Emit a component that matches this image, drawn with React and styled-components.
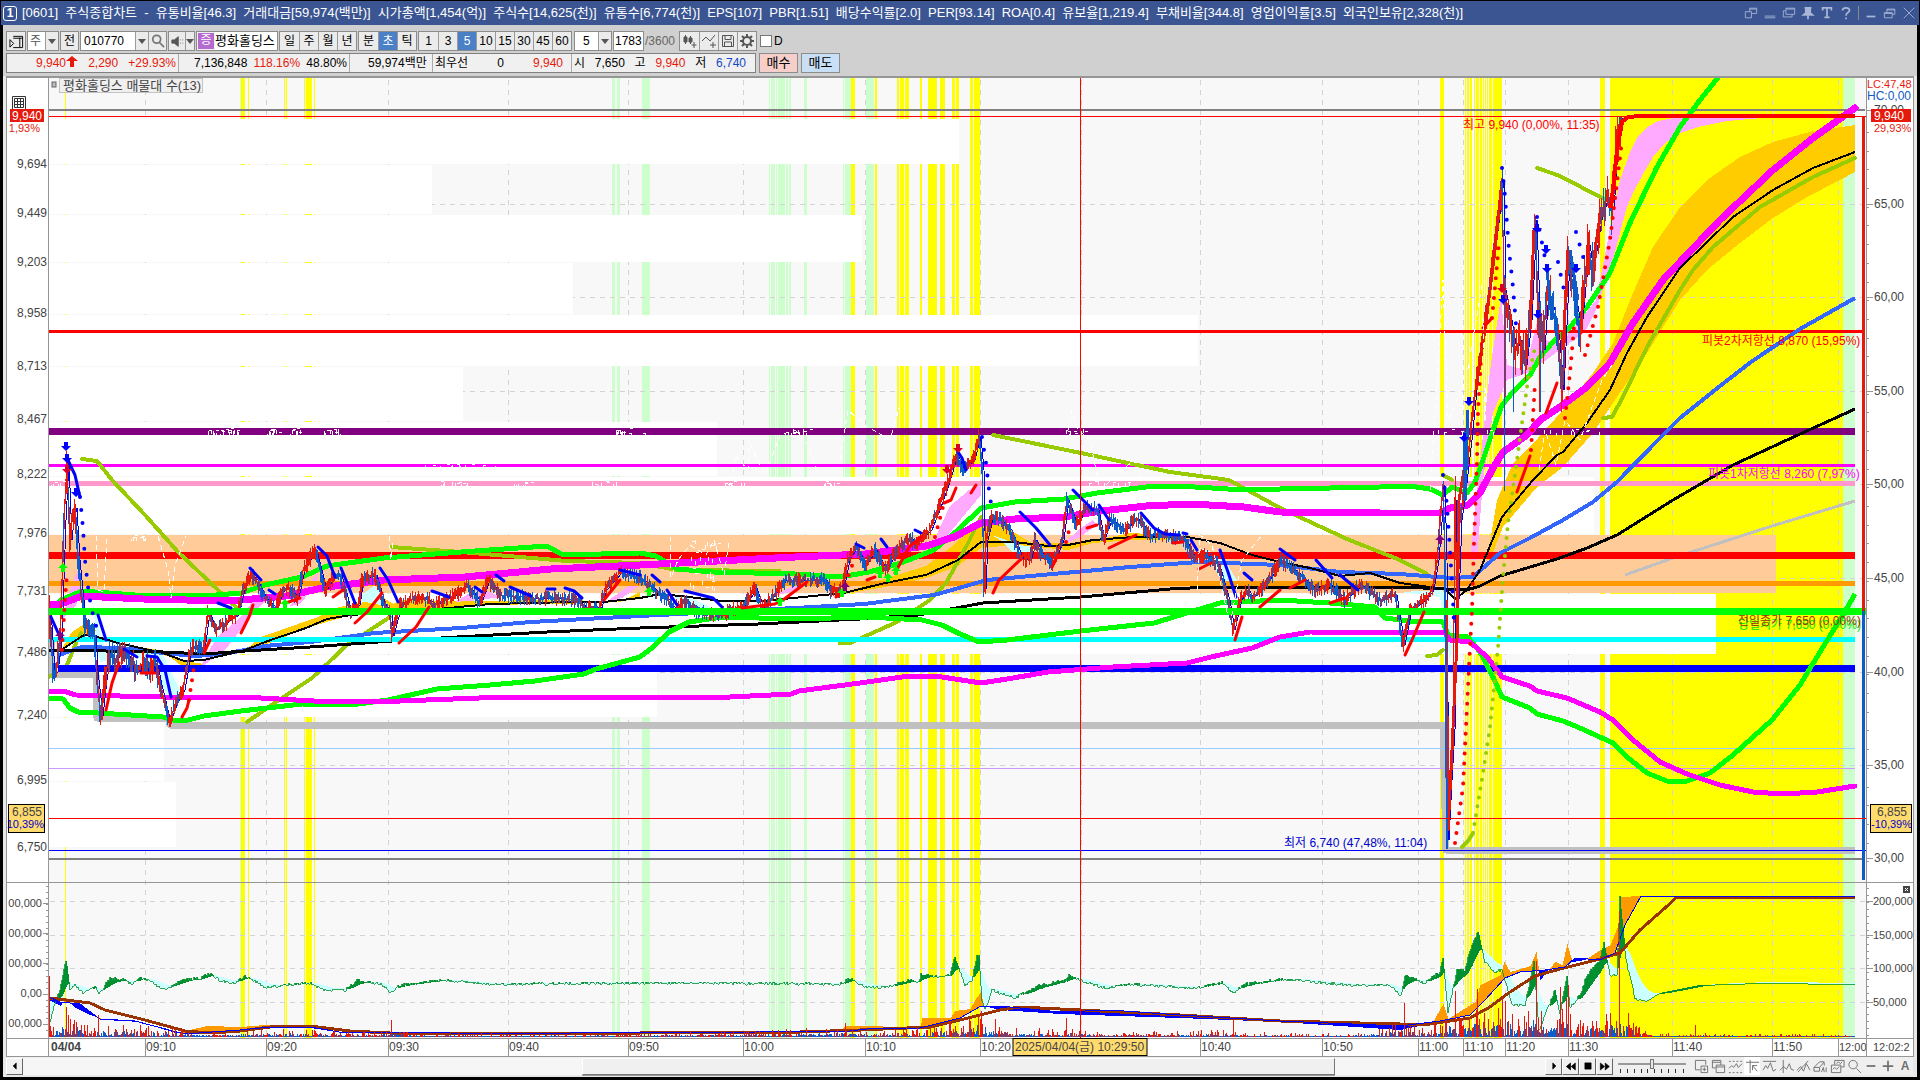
import React from 'react';
import styled, { createGlobalStyle } from 'styled-components';

const GlobalStyle = createGlobalStyle`
  * { box-sizing: border-box; }
  body {
    margin: 0;
    background: #000;
    font-family: "Liberation Sans", "Noto Sans CJK KR", sans-serif;
    font-size: 12px;
    color: #000;
  }
  button, input, select { font: inherit; color: inherit; margin: 0; }
`;

const RED = '#e61a0c';
const BLUE = '#0f5bc8';

/* ---------- window ---------- */

const Window = styled.div`
  min-height: 100vh;
  display: flex;
  flex-direction: column;
  padding: 1px 1px 3px;
  background: #000;
`;

const TitleBar = styled.header`
  height: 24px;
  display: flex;
  align-items: center;
  padding: 0 2px 0 2px;
  background: #3a5592;
  color: #fff;
`;

const WindowNo = styled.span`
  width: 14px;
  height: 15px;
  margin-right: 5px;
  border: 1px solid #fff;
  border-radius: 3px;
  font-weight: bold;
  line-height: 13px;
  text-align: center;
`;

const TitleText = styled.h1`
  flex: 0 0 75.3%;
  display: flex;
  align-items: baseline;
  justify-content: space-between;
  margin: 0;
  font-size: 13px;
  font-weight: normal;
  line-height: 20px;
  white-space: nowrap;
`;

const TitleIcons = styled.div`
  margin-left: auto;
  display: flex;
  align-items: center;
  gap: 3px;
  color: #a9b6d6;
`;

const IconButton = styled.button`
  width: 16px;
  height: 18px;
  padding: 0;
  border: 0;
  background: ${p => (p.$on ? '#fff' : 'none')};
  display: flex;
  align-items: center;
  justify-content: center;
  color: inherit;
`;

const Split = styled.i`
  width: 1px;
  height: 14px;
  margin: 0 1px;
  background: #8a8a8a;
`;

const Frame = styled.main`
  flex: 1;
  display: flex;
  flex-direction: column;
  margin: 0 2px;
  padding-bottom: 2px;
  background: #e8e8e8;
`;

/* ---------- toolbars ---------- */

const Bars = styled.div`
  padding: 6px 3px 1px;
  background: #d0d0d0;
`;

const Row = styled.div`
  display: flex;
  align-items: center;
  gap: ${p => p.$gap || 1}px;
  height: ${p => p.$h}px;
  margin-bottom: 2px;
`;

const Group = styled.div`
  display: flex;
  height: 20px;
  margin-right: ${p => p.$mr || 0}px;
  border: 1px solid #8c8c8c;
  background: #f0f0f0;
`;

const Key = styled.button`
  width: ${p => p.$w || 19}px;
  padding: 0;
  border: 0;
  border-left: ${p => (p.$first ? 0 : 1)}px solid #9a9a9a;
  background: ${p => (p.$on ? '#4a80c6' : '#ebebeb')};
  color: ${p => (p.$on ? '#fff' : p.$c || '#000')};
  display: flex;
  align-items: center;
  justify-content: center;
  line-height: 18px;
  white-space: nowrap;
`;

const Field = styled.input`
  width: ${p => p.$w}px;
  padding: 0 ${p => p.$pad || 3}px;
  border: 0;
  background: #fff;
  outline: none;
`;

const Drop = styled.select`
  width: ${p => p.$w}px;
  padding: 0 0 0 ${p => p.$pl || 2}px;
  border: 0;
  border-radius: 0;
  appearance: none;
  color: ${p => p.$c || '#000'};
  background: #fff;
  outline: none;
`;

const Badge = styled.span`
  width: 16px;
  margin: 1px;
  background: #b56ad0;
  color: #fff;
  line-height: 15px;
  text-align: center;
`;

const StockName = styled.span`
  width: 62px;
  background: #fff;
  font-size: 13px;
  line-height: 17px;
  white-space: nowrap;
`;

const Total = styled.span`
  width: 33px;
  color: #666;
`;

const Check = styled.label`
  display: flex;
  align-items: center;
  gap: 2px;
  margin-left: 2px;
  input { width: 12px; height: 12px; appearance: none; border: 1px solid #777; background: #fff; }
`;

const Quote = styled.div`
  display: flex;
  align-items: center;
  width: 750px;
  height: 20px;
  border: 1px solid #808080;
  background: #f0f0f0;
`;

const Cell = styled.div`
  width: ${p => p.$w}px;
  height: 18px;
  display: flex;
  align-items: center;
  justify-content: space-between;
  padding: 0 ${p => p.$pr || 2}px 0 ${p => p.$pl || 2}px;
  border-right: ${p => (p.$last ? 0 : 1)}px solid #aaa;
  line-height: 18px;
  white-space: nowrap;
`;

const Num = styled.span`
  color: ${p => p.$c || '#000'};
`;

const Order = styled.button`
  width: 39px;
  height: 20px;
  padding: 0;
  border: 1px solid #8c8c8c;
  background: ${p => p.$bg};
  font-size: 13px;
  line-height: 18px;
`;

/* ---------- chart ---------- */

const ChartBox = styled.section`
  flex: 1;
  display: grid;
  grid-template-columns: 42px 1fr 47px;
  grid-template-rows: 1fr 18px;
  margin: 0 3px;
  border: 1px solid #969696;
  border-top-width: 2px;
  background: #fff;
`;

const Pane = styled.svg`
  width: 100%;
  height: 100%;
  min-height: 0;
  display: block;
  overflow: hidden;
  background: ${p => p.$bg || '#fff'};
  text { font-size: 12px; fill: #444; }
  text.small { font-size: 11px; }
  text.legend { font-size: 13px; }
`;

const Scroller = styled.footer`
  height: 18px;
  display: flex;
  align-items: center;
  margin: 0 4px 0 3px;
  background: #efefef;
`;

const Raised = styled.button`
  width: 17px;
  height: 17px;
  padding: 0;
  border: 1px solid;
  border-color: #fff #666 #666 #fff;
  background: #f0f0f0;
  display: flex;
  align-items: center;
  justify-content: center;
`;

const Track = styled.div`
  flex: 1;
  height: 17px;
  display: grid;
  grid-template-columns: 559fr 753fr 210fr;
  background: #f6f6f6;
`;

const Thumb = styled.div`
  grid-column: 2;
  border: 1px solid;
  border-color: #fff #777 #777 #fff;
  background: #f0f0f0;
  box-shadow: 0 1px #999;
`;

const Speed = styled.label`
  width: 78px;
  padding: 0 5px;
  input {
    display: block;
    width: 68px;
    height: 10px;
    margin: 0;
    appearance: none;
    background: linear-gradient(#999, #999) 0 4px / 100% 2px no-repeat;
  }
  input::-webkit-slider-thumb {
    appearance: none;
    width: 4px;
    height: 10px;
    background: #e8e8e8;
    border: 1px solid #777;
  }
  svg { display: block; }
`;

const Tools = styled.div`
  display: flex;
  gap: 1px;
  margin-left: 2px;
  color: #707070;
`;

/* ---------- data ---------- */

const TITLE = [
  '[0601]', '주식종합차트', '-', '유통비율[46.3]', '거래대금[59,974(백만)]', '시가총액[1,454(억)]',
  '주식수[14,625(천)]', '유통수[6,774(천)]', 'EPS[107]', 'PBR[1.51]', '배당수익률[2.0]', 'PER[93.14]',
  'ROA[0.4]', '유보율[1,219.4]', '부채비율[344.8]', '영업이익률[3.5]', '외국인보유[2,328(천)]',
];

const YELLOW_BANDS = [
  [65, 1], [241, 4], [248, 1], [284, 1], [286, 1], [304, 1], [306, 6], [314, 1],
  [851, 4], [875, 2], [897, 2], [900, 4], [905, 4], [920, 2], [928, 9], [940, 5], [952, 3], [956, 3],
  [970, 3], [974, 6], [1440, 4], [1465, 1], [1467, 2], [1470, 2], [1474, 1], [1476, 3], [1480, 2],
  [1483, 1], [1485, 1], [1487, 1], [1489, 3], [1493, 9], [1600, 5], [1610, 233],
];
const GREEN_BANDS = [
  [240, 1], [612, 3], [617, 3], [642, 8], [769, 1], [771, 4], [776, 1], [778, 7], [786, 2], [789, 2],
  [804, 3], [843, 1], [845, 4], [849, 2], [866, 8], [1843, 12],
];

// y, height, right edge, colour
const PROFILE = [
  [119, 45, 959], [165, 49, 432], [215, 47, 862], [263, 51, 573], [315, 51, 1198], [367, 54, 463],
  [422, 54, 717], [477, 57, 1594], [535, 58, 1776, '#ffcb99'], [594, 60, 1716], [655, 62, 657],
  [718, 63, 164], [782, 65, 176],
];

const GRID_X = [145, 266, 388, 508, 628, 743, 865, 980, 1081, 1200, 1322, 1418, 1463, 1505, 1568, 1672, 1772, 1838];
const GRID_Y = [204, 297, 391, 484, 578, 672, 765, 901, 935, 968, 1002];

const TIMES = [
  [145, '09:10'], [266, '09:20'], [388, '09:30'], [508, '09:40'], [628, '09:50'], [743, '10:00'],
  [865, '10:10'], [980, '10:20'], [1200, '10:40'], [1322, '10:50'], [1418, '11:00'], [1463, '11:10'],
  [1505, '11:20'], [1568, '11:30'], [1672, '11:40'], [1772, '11:50'], [1838, '12:00'],
];

const LEFT_LABELS = [
  [164, '9,694'], [213, '9,449'], [262, '9,203'], [313, '8,958'], [366, '8,713'], [419, '8,467'],
  [474, '8,222'], [533, '7,976'], [591, '7,731'], [652, '7,486'], [715, '7,240'], [780, '6,995'], [847, '6,750'],
];
const RIGHT_LABELS = [
  [110, '70,00'], [204, '65,00'], [297, '60,00'], [391, '55,00'], [484, '50,00'], [578, '45,00'],
  [672, '40,00'], [765, '35,00'], [858, '30,00'],
];

const PRICE = [
  49,610, 51,640, 53,672, 56,672, 60,640, 64,520, 67,462, 70,540, 72,520, 75,508, 78,560, 84,620, 90,635, 94,635,
  97,680, 101,716, 105,680, 109,655, 115,660, 125,650, 130,660, 138,670, 145,660, 150,670, 155,660, 160,685,
  169,722, 175,705, 183,690, 190,650, 196,645, 203,650, 208,612, 215,630, 222,625, 237,615, 243,590, 250,575,
  256,580, 265,598, 275,608, 283,590, 289,588, 297,598, 303,570, 315,550, 320,570, 325,590, 335,575, 340,575,
  350,612, 358,605, 362,580, 375,575, 383,602, 390,615, 392,636, 400,605, 410,600, 425,598, 435,605, 455,595,
  467,585, 480,603, 488,580, 500,595, 530,598, 560,598, 575,600, 585,607, 600,608, 605,590, 620,573, 640,578,
  655,590, 668,600, 675,610, 683,600, 695,610, 720,616, 730,610, 745,605, 755,588, 762,608, 770,600, 785,580,
  800,580, 825,580, 832,592, 842,590, 848,560, 856,547, 865,565, 875,550, 885,570, 900,545, 910,538, 915,545,
  930,530, 938,510, 947,485, 956,455, 963,470, 973,460, 979,437, 982,470, 984,590, 986,540, 992,515, 1000,520,
  1010,530, 1022,560, 1030,558, 1035,540, 1042,555, 1052,565, 1062,540, 1067,500, 1076,525, 1085,508, 1097,510,
  1103,540, 1110,520, 1125,530, 1136,518, 1150,535, 1165,535, 1185,540, 1195,560, 1205,555, 1218,565, 1228,600,
  1233,630, 1240,600, 1247,590, 1252,598, 1263,588, 1275,570, 1280,560, 1300,575, 1315,590, 1330,585, 1345,600,
  1360,585, 1380,600, 1395,595, 1403,645, 1410,610, 1425,600, 1432,590, 1437,560, 1443,485, 1445,560, 1447,840,
  1450,780, 1453,730, 1455,500, 1457,600, 1460,520, 1463,500, 1470,440, 1476,380, 1485,320, 1495,240, 1502,180,
  1504,290, 1510,320, 1515,350, 1520,340, 1525,365, 1530,320, 1535,220, 1538,310, 1543,350, 1547,290, 1553,310,
  1558,340, 1562,390, 1568,260, 1575,300, 1580,330, 1588,245, 1592,270, 1600,220, 1606,200, 1612,210, 1616,150,
  1621,118,
];

const UPPER_GREEN = '49,613 61,600 82,591 135,595 204,596 241,593 265,585 302,577 327,566 384,558 461,552 547,546 563,555 640,553 656,556 677,569 713,572 795,574 840,577 869,572 901,563 934,550 958,530 981,508 1015,502 1064,499 1097,493 1146,487 1179,486 1228,489 1280,489 1380,487 1410,486 1430,489 1443,495 1452,487 1467,493 1475,482 1483,460 1493,430 1502,405 1513,392 1530,375 1540,357 1553,342 1570,327 1587,307 1610,273 1630,223 1657,167 1680,127 1700,100 1720,75';
const LOWER_GREEN = '49,698 63,699 70,708 78,712 98,713 163,717 173,720 188,720 204,716 241,711 302,704 351,705 388,700 437,689 490,685 535,681 584,674 596,669 640,657 652,648 669,632 689,622 722,617 795,619 868,617 922,620 942,625 958,633 979,642 1007,640 1081,631 1154,623 1187,613 1220,603 1280,600 1330,603 1375,607 1385,618 1410,621 1443,622 1448,635 1468,637 1480,652 1493,677 1502,697 1530,708 1537,714 1563,721 1580,728 1613,743 1627,757 1647,773 1667,781 1687,781 1710,773 1733,755 1772,720 1800,685 1823,647 1843,615 1855,594';
const UPPER_MAGENTA = '49,604 61,604 82,596 143,599 229,601 286,596 327,587 384,580 465,577 551,569 640,565 795,557 865,554 926,546 954,537 981,523 1015,519 1064,517 1101,511 1146,506 1191,504 1244,507 1280,512 1380,513 1440,513 1450,508 1468,505 1480,493 1493,468 1503,452 1527,435 1540,420 1563,405 1587,387 1610,363 1633,323 1663,280 1680,262 1720,220 1773,170 1813,138 1855,108';
const LOWER_MAGENTA = '49,691 63,691 76,695 163,697 261,698 314,701 400,701 506,697 640,697 730,697 791,694 799,691 860,683 909,676 942,677 981,683 1007,679 1048,672 1113,667 1187,663 1211,657 1252,648 1280,637 1310,632 1445,633 1450,640 1470,642 1487,657 1502,677 1530,686 1537,691 1567,698 1600,712 1613,720 1633,740 1660,762 1687,774 1720,785 1753,792 1783,794 1817,792 1855,786';
const MID_BLUE = '59,655 82,647 122,648 163,653 196,656 229,653 265,646 310,642 375,633 461,628 531,622 640,616 795,608 864,604 934,595 987,580 1064,573 1130,567 1199,562 1280,565 1340,572 1400,574 1450,578 1473,577 1500,553 1530,538 1563,520 1593,502 1617,482 1658,440 1680,418 1720,386 1751,362 1800,329 1855,298';
const SLOW_BLACK = '49,650 163,652 204,654 245,651 310,647 392,641 457,637 547,632 640,628 758,624 860,619 918,615 983,603 1081,597 1170,589 1211,587 1280,587 1400,587 1467,590 1480,586 1500,576 1557,559 1587,548 1617,535 1673,500 1733,465 1787,440 1855,409';
const FAST_BLACK = '49,651 61,650 84,635 94,636 118,643 163,653 184,661 204,660 245,650 265,642 306,628 327,619 351,615 449,608 490,604 571,602 604,602 640,598 660,594 689,597 722,601 762,601 803,597 844,593 885,583 926,575 958,560 981,542 1015,542 1048,546 1068,545 1093,540 1134,537 1187,537 1220,543 1252,555 1280,562 1310,568 1340,576 1370,573 1400,583 1445,589 1455,599 1467,590 1480,570 1502,517 1533,480 1557,455 1563,452 1587,423 1610,390 1627,353 1647,317 1680,268 1733,217 1773,190 1813,168 1855,152';

const OLIVE = [
  '82,459 97,461 112,480 145,515 178,552 237,608', '67,665 76,643 81,633', '49,677 52,675',
  '247,722 282,698 312,678 347,645 390,617', '391,547 461,552 567,561 640,563 677,570 779,571',
  '840,643 850,643 897,622 930,600 946,583 966,547 981,517',
  '993,435 1081,453 1170,472 1229,480 1280,508 1347,539 1400,560 1427,574', '1427,656 1437,655 1443,650',
  '1537,168 1560,176 1604,199', '1443,475 1452,480',
  '1603,418 1612,417 1623,397 1647,347 1680,290 1693,270 1713,247 1760,207 1813,177 1855,158',
];

const GOLD_BANDS = [
  '61,650 72,632 84,624 96,630 93,637 84,635 70,645',
  '118,643 163,651 184,668 204,664 184,661 150,651',
  '245,650 261,637 318,617 339,607 384,598 395,605 351,615 306,628 270,643',
  '384,610 400,600 449,601 571,600 620,602 640,592 640,599 604,603 490,605 430,610',
  '844,594 868,584 926,566 950,548 981,520 1000,522 1015,533 1032,543 1081,543 1130,533 1187,536 1187,540 1134,540 1093,543 1068,550 1015,545 981,548 958,566 926,578 885,587',
  '1487,560 1497,500 1513,463 1530,447 1563,410 1593,373 1613,343 1633,293 1653,247 1680,207 1707,180 1740,157 1773,142 1813,131 1855,125 1855,172 1840,180 1807,197 1773,218 1740,243 1707,270 1680,300 1647,353 1613,403 1593,433 1563,467 1537,487 1503,527 1490,560',
];
const PINK_BANDS = [
  '62,620 70,590 78,570 82,590 76,605', '200,668 216,638 240,618 260,592 268,598 250,618 225,650',
  '290,606 303,592 318,572 316,585 300,604', '455,602 470,593 490,592 500,597 480,600', '605,603 620,592 640,578 640,585 622,598',
  '740,605 770,597 795,585 810,584 790,592', '934,540 950,506 981,480 981,495 966,513 948,535',
  '1062,545 1081,528 1093,520 1097,525 1080,537',
  '1470,560 1480,463 1490,370 1501,297 1507,365 1525,370 1538,318 1545,340 1560,345 1580,320 1596,300 1602,270 1607,245 1613,210 1620,180 1630,152 1638,136 1647,127 1658,121 1673,118 1773,117 1727,121 1702,126 1680,133 1665,143 1653,157 1643,174 1633,193 1626,210 1620,233 1610,270 1596,310 1585,332 1553,355 1530,372 1507,380 1493,413 1483,480 1477,560',
];
const ICE_BANDS = [
  '92,600 102,640 112,660 100,662', '122,648 163,655 180,690 170,700 150,665', '355,600 375,585 398,620 380,605',
  '670,594 695,600 722,612 700,615', '992,535 1020,545 1040,548 1020,560 1000,540', '1200,548 1222,556 1240,585 1230,590 1212,565',
  '1400,592 1443,590 1455,640 1450,660 1440,597',
];

const BLUE_SAR = [
  '51,617 60,637', '67,458 75,475 80,497', '98,615 106,640', '124,649 137,657', '147,656 157,657 165,670 171,697',
  '218,603 231,608', '250,568 261,580', '269,590 275,594', '318,547 327,556 335,577', '341,568 346,580 355,603',
  '380,568 388,580 398,602', '432,591 449,597', '475,587 482,592', '496,575 504,581', '510,587 531,596',
  '547,589 555,589', '565,588 574,591 582,598', '620,570 640,575', '652,575 660,582', '667,590 677,605',
  '685,591 713,598 722,607', '856,544 864,548', '881,539 887,547', '915,530 921,533', '958,452 962,458 966,470',
  '1020,512 1036,528 1050,545', '1073,490 1093,510', '1099,505 1109,520', '1141,513 1154,528 1165,534 1179,535',
  '1183,533 1187,534', '1191,540 1197,550', '1220,550 1228,572 1236,597', '1244,573 1252,580', '1280,549 1295,560',
  '1316,560 1332,578', '1340,575 1358,590',
];
const RED_SAR = [
  '106,710 112,683 119,663', '141,673 155,673', '182,717 187,708 189,700', '204,653 210,640', '241,633 249,617 253,605',
  '286,603 300,598', '333,597 343,590', '355,623 367,612 382,593', '399,643 416,627 429,607', '604,600 620,580',
  '742,608 775,604 783,600 807,582', '836,597 840,594', '867,580 875,577', '895,573 909,547 921,537', '944,503 951,500 956,488', '971,493 976,485',
  '993,593 999,580 1020,560', '1052,567 1058,555', '1087,528 1097,525', '1109,548 1136,535', '1173,543 1183,542',
  '1199,569 1211,563', '1235,640 1242,617', '1260,607 1280,590', '1290,588 1305,580', '1330,603 1345,598',
  '1405,655 1412,640 1424,612', '1517,492 1530,456', '1546,413 1557,383', '1492,318 1483,328',
];
const BLUE_DOTS = [
  '80,497 83,528 85,560 88,587 91,607 98,633', '982,437 986,463 989,490 992,510', '1443,475 1447,505 1450,550 1453,600 1454,625',
  '1502,168 1505,196 1509,250 1513,287 1516,325', '1537,217 1542,243 1547,268', '1558,262 1564,290', '1576,232 1584,260',
];
const RED_DOTS = [
  '62,650 65,600 67,573', '189,700 194,667', '842,594 854,560', '935,537 944,503', '1066,542 1071,523',
  '1455,843 1463,787 1466,727 1470,647 1472,610 1474,543 1477,460 1478,413 1482,340', '1492,318 1495,287 1499,243',
  '1531,450 1534,400 1535,383', '1565,418 1570,373 1574,327', '1585,355 1598,307 1610,240 1617,183 1622,140',
];
const OLIVE_DOTS = '1473,833 1483,773 1490,727 1498,648 1503,577 1508,523 1517,460 1522,423 1528,380 1535,347';

// x, y, direction, colour
const MARKS = [
  [66, 446, 1, '#00f'], [67, 458, 1, '#00f'], [67, 469, 1, '#d8002a'], [76, 492, 1, '#00f'], [63, 568, -1, '#0f0'],
  [60, 636, -1, '#800080'], [285, 604, -1, '#0f0'], [649, 592, -1, '#0f0'], [780, 602, -1, '#0f0'], [842, 593, -1, '#0f0'],
  [845, 587, -1, '#800080'], [880, 574, -1, '#0f0'], [888, 578, -1, '#0f0'], [896, 571, -1, '#0f0'], [947, 469, 1, '#d8002a'],
  [958, 448, 1, '#d8002a'], [1440, 540, -1, '#800080'], [1464, 437, 1, '#00f'], [1469, 401, 1, '#00f'], [1502, 288, 1, '#d8002a'],
  [1503, 299, 1, '#00f'], [1537, 228, 1, '#00f'], [1546, 249, 1, '#00f'], [1547, 268, 1, '#00f'], [1538, 314, 1, '#00f'], [1576, 268, 1, '#00f'],
];

const GHOST = [
  '96,536 98,590 104,592 107,536', '158,536 168,570 171,598 175,565 186,536',
  '389,536 391,560 393,540', '670,536 671,578 678,560 690,545 706,555 714,540 724,575 729,542',
  '732,490 735,455 748,470 748,440 765,475 780,435 795,430 808,445 818,475', '840,460 848,410 865,425 890,440 900,405',
  '1066,440 1072,410 1078,430 1090,440 1100,490 1134,460 1142,482', '1197,590 1200,535 1212,545 1230,625 1242,560 1262,535',
  '1430,490 1438,370 1443,280 1448,420 1466,380 1482,285 1486,420', '1539,470 1545,430 1556,465 1565,420 1580,440 1602,380 1612,365',
];

// x range, y range, tick count: lagging line showing through the level bars
const SPECKS = [
  [205, 238, 428, 435, 26], [264, 282, 428, 435, 12], [290, 304, 428, 435, 10], [322, 340, 428, 435, 12],
  [612, 645, 428, 435, 16], [780, 812, 428, 435, 14], [1066, 1084, 428, 435, 10], [1435, 1500, 428, 435, 10],
  [1550, 1600, 428, 435, 8], [420, 500, 464, 467, 14], [49, 62, 481, 486, 6], [440, 468, 481, 486, 12],
  [510, 530, 481, 486, 8], [590, 620, 481, 486, 8], [720, 745, 481, 486, 10], [820, 838, 481, 486, 8],
  [1085, 1130, 481, 486, 10], [130, 150, 535, 540, 10], [690, 718, 536, 590, 30],
];

const GREEN_OSC = [
  49,1025, 56,1000, 60,990, 66,960, 70,990, 75,985, 83,993, 95,985, 99,995, 105,985, 110,978, 125,980, 132,984,
  140,978, 150,980, 160,988, 170,988, 180,980, 200,978, 210,973, 220,981, 235,983, 245,976, 255,981, 265,988,
  285,985, 310,983, 325,990, 345,990, 358,980, 380,984, 391,992, 400,985, 440,980, 490,984, 640,983, 700,983,
  840,984, 850,978, 865,987, 885,987, 910,980, 919,982, 921,974, 935,976, 950,975, 953,962, 955,958, 965,985, 972,980,
  977,956, 979,955, 982,1000, 985,1010, 992,990, 1015,998, 1025,992, 1040,985, 1066,980, 1069,975, 1085,982, 1105,988,
  1130,984, 1195,988, 1222,982, 1233,993, 1245,984, 1280,979, 1350,985, 1390,985, 1401,996, 1405,975, 1425,983,
  1440,972, 1443,958, 1448,1012, 1455,980, 1457,968, 1465,970, 1470,950, 1478,932, 1485,962, 1495,972, 1502,970, 1512,1005,
  1525,1005, 1534,962, 1539,1030, 1555,990, 1560,1015, 1567,975, 1570,1008, 1580,995, 1587,975, 1600,960, 1604,943,
  1610,975, 1617,975, 1620,897, 1626,960, 1635,998, 1647,1001, 1660,993, 1700,985, 1760,983, 1855,984,
];
const VOL_ORANGE = [
  49,1000, 60,1006, 66,998, 75,1008, 90,1015, 105,1020, 140,1022, 175,1033, 207,1026, 240,1027, 265,1025, 310,1028,
  345,1033, 500,1034, 640,1033, 790,1032, 840,1031, 845,1026, 920,1027, 922,1018, 950,1018, 955,1011, 970,1009,
  976,998, 981,992, 983,1006, 1000,1010, 1060,1014, 1180,1018, 1280,1022, 1400,1030, 1432,1023, 1443,1004, 1448,1019,
  1462,1010, 1475,1002, 1480,985, 1500,975, 1504,962, 1510,972, 1530,966, 1536,952, 1540,980, 1555,962, 1562,965,
  1567,944, 1572,962, 1585,960, 1600,950, 1610,945, 1618,925, 1620,897, 1641,896,
];
const VOL_BLUE = [
  49,997, 60,1002, 80,1004, 100,1019, 135,1021, 150,1025, 185,1034, 240,1030, 260,1028, 310,1027, 345,1033, 400,1032,
  500,1034, 640,1032, 720,1033, 790,1031, 850,1031, 875,1028, 920,1028, 960,1018, 981,1006, 1000,1006, 1060,1012,
  1110,1010, 1180,1015, 1280,1021, 1400,1026, 1440,1021, 1470,1015, 1485,1000, 1505,978, 1520,972, 1545,970, 1565,967,
  1575,958, 1600,960, 1615,953, 1625,925, 1641,896, 1855,896,
];
const VOL_BROWN = '49,998 66,1000 90,1003 105,1010 145,1020 185,1031 210,1033 240,1031 270,1027 310,1026 350,1031 390,1033 640,1033 800,1032 860,1030 930,1027 960,1020 1000,1010 1020,1007 1080,1010 1180,1015 1280,1021 1400,1024 1430,1024 1470,1018 1490,1007 1510,992 1535,976 1560,969 1600,959 1620,953 1640,930 1665,908 1677,897 1855,897';
const VOL_HEIGHT = [
  49,40, 52,20, 58,14, 66,40, 75,26, 85,14, 97,18, 104,14, 130,14, 160,12, 200,5, 250,7, 300,9, 350,6, 391,8, 420,4, 640,4,
  700,5, 840,10, 870,6, 915,10, 950,18, 965,10, 974,28, 984,36, 990,14, 1010,10, 1060,8, 1070,12, 1100,5, 1230,8,
  1240,5, 1350,4, 1400,16, 1425,8, 1440,26, 1450,30, 1462,22, 1480,42, 1490,20, 1503,44, 1520,16, 1537,55, 1545,18,
  1567,40, 1575,16, 1600,24, 1612,30, 1620,60, 1628,24, 1640,10, 1655,4, 1855,3,
];

/* ---------- helpers ---------- */

const at = (pts, x) => {
  for (let i = 2; i < pts.length; i += 2) {
    if (x <= pts[i]) {
      const t = (x - pts[i - 2]) / (pts[i] - pts[i - 2] || 1);
      return pts[i - 1] + (pts[i + 1] - pts[i - 1]) * t;
    }
  }
  return pts[pts.length - 1];
};

const noise = n => {
  const v = Math.sin(n * 127.1 + 11.7) * 43758.5453;
  return v - Math.floor(v);
};

const candles = () => {
  let up = '';
  let down = '';
  for (let x = 49; x < 1622; x += 1) {
    const a = at(PRICE, x);
    const b = at(PRICE, x + 1);
    const wild = x > 1500 ? 36 : x < 160 ? 22 : 12;
    const top = Math.max(117, Math.min(a, b) - noise(x) * wild * 0.7);
    const bottom = Math.max(a, b) + noise(x + 0.5) * wild * 0.7;
    const seg = `M${x} ${Math.round(top)}V${Math.round(bottom)}`;
    if (b < a ? noise(x * 3) > 0.2 : noise(x * 3) > 0.72) up += seg;
    else down += seg;
  }
  return { up, down };
};

const ribbon = () => {
  let dark = '';
  let ice = '';
  let line = '';
  let avg = 990;
  for (let x = 49; x < 1856; x += 1) {
    const y = at(GREEN_OSC, x) + (x < 1640 ? (noise(x) - 0.5) * 3 : 0);
    avg += (y - avg) * 0.09;
    if (y < avg - 1) dark += `M${x} ${Math.round(y)}V${Math.round(avg)}`;
    else ice += `M${x} ${Math.round(avg) - 1}V${Math.round(y)}`;
    line += `${x},${Math.round(y)} `;
  }
  return { dark, ice, line };
};

const volumes = () => {
  let up = '';
  let down = '';
  for (let x = 49; x < 1855; x += 1) {
    const h = at(VOL_HEIGHT, x);
    const k = noise(x * 1.7);
    if (k > 0.6) up += `M${x} 1037v-${Math.max(1, Math.round(h * k * k * k))}`;
    else down += `M${x} 1037v-${Math.max(1, Math.round(h * k * 0.7))}`;
  }
  return { up, down };
};

const spread = () => {
  let orange = '';
  let blue = '';
  for (let x = 49; x < 1642; x += 1) {
    const o = Math.round(at(VOL_ORANGE, x));
    const b = Math.round(at(VOL_BLUE, x));
    if (o < b) orange += `M${x} ${o}V${b}`;
    else blue += `M${x} ${b}V${o}`;
  }
  return { orange, blue };
};

const specks = () => {
  let d = '';
  SPECKS.forEach(([x1, x2, y1, y2, n], s) => {
    for (let i = 0; i < n; i += 1) {
      const x = Math.round(x1 + noise(s * 31 + i) * (x2 - x1));
      const y = Math.round(y1 + noise(s * 17 + i * 3) * (y2 - y1 - 2));
      d += i % 3 ? `M${x} ${y}v${Math.min(4, y2 - y)}` : `M${x} ${y}h3`;
    }
  });
  return d;
};

const toPoints = pts => pts.map((v, i) => (i % 2 ? `${v} ` : `${v},`)).join('');

/* ---------- chart pieces ---------- */

const Line = ({ pts, c, w = 1, ...rest }) => (
  <polyline points={pts} fill="none" stroke={c} strokeWidth={w} strokeLinejoin="round" {...rest} />
);

const HLine = ({ y, c, w = 1, x2 = 1855 }) => (
  <rect x="49" y={y} width={x2 - 49} height={w} fill={c} />
);

const Mark = ({ x, y, dir, c }) => (
  <path transform={`translate(${x} ${y}) scale(1 ${dir})`} d="M-2 -4h4v4h3l-5 5l-5 -5h3z" fill={c} />
);

const Plot = () => {
  const price = candles();
  const osc = ribbon();
  const vol = volumes();
  const gap = spread();
  return (
    <Pane viewBox="49 78 1817 960" preserveAspectRatio="none" $bg="#f8f8f8">
      <g shapeRendering="crispEdges">
        {GREEN_BANDS.map(([x, w]) => <rect key={x} x={x} y="77" width={w} height="961" fill="#ccffcc" />)}
        {YELLOW_BANDS.map(([x, w]) => <rect key={x} x={x} y="77" width={w} height="961" fill="#ffff00" />)}
        <g stroke="#d3d3d3" strokeDasharray="5 5">
          {GRID_X.map(x => <line key={x} x1={x + 0.5} x2={x + 0.5} y1="80" y2="1038" />)}
          {GRID_Y.map(y => <line key={y} x1="50" x2="1866" y1={y + 0.5} y2={y + 0.5} />)}
        </g>
        {PROFILE.map(([y, h, x, c]) => <rect key={y} x="49" y={y} width={x - 49} height={h} fill={c || '#fff'} />)}
        <HLine y={109} c="#808080" w={2} x2={1865} />
        <HLine y={858} c="#808080" w={2} x2={1865} />
        <Line pts="51,640 51,674 96,674 97,718 168,718 170,725 1443,725 1446,850 1855,850" c="#c0c0c0" w={7} />
        <Line pts="1625,575 1673,558 1772,526 1855,501" c="#c0c0c0" w={3} />
        {GOLD_BANDS.map(p => <polygon key={p} points={p} fill="#ffcc00" />)}
        {ICE_BANDS.map(p => <polygon key={p} points={p} fill="#ccffff" />)}
        {PINK_BANDS.map(p => <polygon key={p} points={p} fill="#ffaaff" />)}
        <HLine y={748} c="#99ccff" />
        <HLine y={768} c="#cc99ff" />
        <HLine y={428} c="#800080" w={7} />
        <HLine y={464} c="#ff00ff" w={3} />
        <HLine y={481} c="#ff99cc" w={5} />
        <HLine y={330} c="#ff0000" w={3} x2={1864} />
        <HLine y={552} c="#ff0000" w={7} />
        <HLine y={581} c="#ff9900" w={5} />
      </g>
      <g shapeRendering="crispEdges">
        {OLIVE.map(p => <Line key={p} pts={p} c="#99cc00" w={4} strokeLinecap="round" />)}
        <Line pts={MID_BLUE} c="#3366ff" w={4} />
        <Line pts={SLOW_BLACK} c="#000" w={3} />
        <rect x="49" y="637" width="1806" height="5" fill="#00ffff" />
        <rect x="58" y="665" width="1797" height="7" fill="#0000ff" />
        <Line pts={UPPER_GREEN} c="#00ff00" w={5} />
        <Line pts={LOWER_GREEN} c="#00ff00" w={5} />
        <Line pts={UPPER_MAGENTA} c="#ff00ff" w={7} strokeLinecap="round" />
        <Line pts={LOWER_MAGENTA} c="#ff00ff" w={5} strokeLinecap="round" />
        <Line pts={FAST_BLACK} c="#000" w={2} />
      </g>
      <g shapeRendering="crispEdges" fill="none">
        <Line pts={toPoints(PRICE.map((v, i) => (i % 2 ? v : v + 2)))} c="#0000e0" w={1} />
        <g transform="translate(0.5 0)">
          <path d={price.down} stroke={BLUE} />
          <path d={price.up} stroke={RED} />
          <path d="M1504 300V491M1513 330V412M1540 320V412" stroke={BLUE} />
          <path d="M1505 300V397M1539 320V412M1561 330V412M985 520V594M1455 476V560" stroke={RED} />
        </g>
        <Line pts="1476,390 1486,322 1495,250 1501,190" c={RED} w={3} />
        <Line pts="1530,330 1534,230" c={RED} w={3} />
        <Line pts="1547,270 1552,320" c={BLUE} w={3} />
        <Line pts="1563,350 1568,250" c={RED} w={3} />
        <Line pts="1570,250 1578,300" c={BLUE} w={3} />
        <Line pts="1611,208 1617,150 1622,122 1628,117 1640,116 1855,116" c="#ff0000" w={4} />
        <Line pts="1446,600 1448,830 1452,750 1457,640 1459,500 1464,470" c={RED} w={3} />
        <Line pts="1445,560 1447,849" c={BLUE} w={2} />
        <Line pts="1464,430 1465,500 1468,410" c={BLUE} w={3} />
      </g>
      <rect x="49" y="608" width="1817" height="7" fill="#00ff00" />
      <g fill="none" strokeLinecap="round">
        {BLUE_SAR.map(p => <Line key={p} pts={p} c="#0000ff" w={3} strokeLinecap="round" />)}
        {RED_SAR.map(p => <Line key={p} pts={p} c="#ff0000" w={3} strokeLinecap="round" />)}
        {BLUE_DOTS.map(p => <Line key={p} pts={p} c="#0000ff" w={4} strokeDasharray="0 13" />)}
        {RED_DOTS.map(p => <Line key={p} pts={p} c="#ff0000" w={4} strokeDasharray="0 10" />)}
        <Line pts={OLIVE_DOTS} c="#99cc00" w={4} strokeDasharray="0 9" />
        <Line pts="1462,847 1468,841 1473,833" c="#99cc00" w={4} />
      </g>
      {MARKS.map(([x, y, dir, c]) => <Mark key={`${x}-${y}`} x={x} y={y} dir={dir} c={c} />)}
      <g shapeRendering="crispEdges">
        {GHOST.map(p => <Line key={p} pts={p} c="#fff" strokeDasharray="5 4" />)}
        <path d={specks()} stroke="#fff" fill="none" transform="translate(0.5 0.5)" />
        <HLine y={116} c="#ff0000" x2={1866} />
        <HLine y={850} c="#0000ff" x2={1866} />
        <rect x="1862" y="116" width="3" height="495" fill={RED} />
        <rect x="1862" y="611" width="3" height="269" fill={BLUE} />

        {/* volume pane */}
        <rect x="49" y="882" width="1817" height="1" fill="#969696" />
        <path d={osc.ice} stroke="#ccffff" transform="translate(0.5 0)" />
        <path d={gap.orange} stroke="#ff9900" transform="translate(0.5 0)" />
        <path d={gap.blue} stroke="#0000ff" transform="translate(0.5 0)" />
        <Line pts={osc.line} c="#009030" opacity="0.8" />
        <path d={osc.dark} stroke="#009030" transform="translate(0.5 0)" />
        <Line pts={VOL_BROWN} c="#993300" w={3} />
        <Line pts={toPoints(VOL_BLUE)} c="#0000ff" w={1} />
        <path d={vol.down} stroke={BLUE} transform="translate(0.5 0)" />
        <path d={vol.up} stroke={RED} transform="translate(0.5 0)" />
        <path d="M49.5 1037v-61M66.5 1037v-30M98.5 1037v-22M391.5 1037v-17M845.5 1037v-14M995.5 1037v-18M1066.5 1037v-19M1233.5 1037v-18M1404.5 1037v-34M1455.5 1037v-46M1477.5 1037v-48M1502.5 1037v-40M1505.5 1037v-36M1536.5 1037v-76M1560.5 1037v-50M1568.5 1037v-52M1619.5 1037v-126M1695.5 1037v-12" stroke={RED} />

        {/* crosshair */}
        <rect x="1080" y="77" width="1" height="961" fill="#ff0000" />
        <HLine y={818} c="#ff0000" x2={1866} />
      </g>
      <rect x="52" y="82" width="4" height="5" fill="#bbb" stroke="#666" />
      <rect x="59.5" y="78.500" width="143" height="14" fill="#f0f0f0" stroke="#c4c4c4" />
      <text className="legend" x="63" y="90">평화홀딩스 매물대 수(13)</text>
      <text x="1463" y="129" style={{ fill: '#ff0000' }}>최고 9,940 (0,00%, 11:35)</text>
      <text x="1702" y="345" style={{ fill: '#ff0000' }}>피봇2차저항선 8,870 (15,95%)</text>
      <text x="1708" y="478" style={{ fill: '#ff00ff' }}>피봇1차저항선 8,260 (7,97%)</text>
      <text x="1738" y="629" style={{ fill: '#00ee00' }}>당일시가 7,650 (0,00%)</text>
      <text x="1738" y="625" style={{ fill: '#993300' }}>전일종가 7,650 (0,00%)</text>
      <text x="1284" y="847" style={{ fill: '#0000cc' }}>최저 6,740 (47,48%, 11:04)</text>
    </Pane>
  );
};

const minor = (from, to, step) => {
  const out = [];
  for (let y = from; y < to; y += step) out.push(Math.round(y));
  return out;
};

const LeftAxis = () => (
  <Pane viewBox="7 78 42 960" preserveAspectRatio="none">
    <g shapeRendering="crispEdges">
      <rect x="48" y="77" width="1" height="961" fill="#969696" />
      <rect x="7" y="882" width="42" height="1" fill="#969696" />
      {minor(886, 1036, 6).map(y => <rect key={y} x="46" y={y} width="2" height="1" fill="#969696" />)}
      {[903, 933, 963, 994, 1024].map(y => <rect key={y} x="43" y={y} width="5" height="1" fill="#969696" />)}
    </g>
    {LEFT_LABELS.map(([y, t]) => <text key={t} x="47" y={y + 4} textAnchor="end">{t}</text>)}
    <g textAnchor="end">
      <text className="small" x="42" y="907">00,000</text>
      <text className="small" x="42" y="937">00,000</text>
      <text className="small" x="42" y="967">00,000</text>
      <text className="small" x="42" y="997">0,00</text>
      <text className="small" x="42" y="1027">00,000</text>
    </g>
    <path d="M12.5 96.5h13v13h-13zM14.5 98.5h9v9h-9zM14.5 101.5h9M17.5 98.5v9M20.5 98.5v9M14.5 104.5h9" fill="none" stroke="#333" />
    <rect x="10" y="109" width="34" height="13" fill={RED} />
    <text x="12" y="120" style={{ fill: '#fff' }}>9,940</text>
    <text x="40" y="132" textAnchor="end" className="small" style={{ fill: RED }}>1,93%</text>
    <rect x="8.5" y="804.5" width="36" height="28" fill="#ffdb6e" stroke="#000" />
    <text x="12" y="816">6,855</text>
    <text x="44" y="828" textAnchor="end" className="small" style={{ fill: '#0000cc' }}>10,39%</text>
  </Pane>
);

const RightAxis = () => (
  <Pane viewBox="1866 78 47 960" preserveAspectRatio="none">
    <g shapeRendering="crispEdges" fill="#969696">
      <rect x="1866" y="77" width="1" height="961" />
      <rect x="1866" y="882" width="48" height="1" />
      {minor(132, 876, 18.7).map(y => <rect key={y} x="1867" y={y} width="2" height="1" />)}
      {RIGHT_LABELS.map(([y]) => <rect key={y} x="1867" y={y} width="6" height="1" />)}
      {minor(888, 1036, 7).map(y => <rect key={y} x="1867" y={y} width="2" height="1" />)}
      {[901, 935, 968, 1002].map(y => <rect key={y} x="1867" y={y} width="6" height="1" />)}
    </g>
    {RIGHT_LABELS.map(([y, t]) => <text key={t} x="1874" y={y + 4}>{t}</text>)}
    <text className="small" x="1867" y="88" style={{ fill: RED }}>LC:47,48</text>
    <text x="1867" y="100" style={{ fill: BLUE }}>HC:0,00</text>
    <rect x="1871" y="109" width="40" height="13" fill={RED} />
    <text x="1874" y="120" style={{ fill: '#fff' }}>9,940</text>
    <text className="small" x="1874" y="132" style={{ fill: RED }}>29,93%</text>
    <rect x="1870.5" y="804.5" width="41" height="28" fill="#ffdb6e" stroke="#000" />
    <text x="1877" y="816">6,855</text>
    <text x="1871" y="828" className="small" style={{ fill: '#0000cc' }}>-10,39%</text>
    <rect x="1903" y="886" width="7" height="7" fill="#444" />
    <path d="M1905 888l3 3m0 -3l-3 3" stroke="#fff" />
    <text className="small" x="1873" y="905">200,000</text>
    <text className="small" x="1873" y="939">150,000</text>
    <text className="small" x="1873" y="972">100,000</text>
    <text className="small" x="1873" y="1006">50,000</text>
  </Pane>
);

const TimeAxis = () => (
  <Pane viewBox="49 1038 1817 18" preserveAspectRatio="none">
    <rect x="49" y="1038" width="1817" height="1" fill="#969696" />
    <text x="51" y="1051" fontWeight="bold">04/04</text>
    {TIMES.map(([x, t]) => (
      <g key={t}>
        <rect x={x} y="1038" width="1" height="18" fill="#969696" />
        <text x={x + 1} y="1051" className={t === '12:00' ? 'small' : undefined}>{t}</text>
      </g>
    ))}
    <rect x="1013" y="1038.5" width="134" height="17" fill="#ffdb6e" stroke="#000" />
    <text x="1015" y="1051">2025/04/04(금) 10:29:50</text>
  </Pane>
);

/* ---------- icons ---------- */

const Glyph = ({ d, size = 16, w = 1, fill = 'none' }) => (
  <svg width={size} height={size} viewBox="0 0 16 16" fill={fill} stroke="currentColor" strokeWidth={w} aria-hidden="true">
    <path d={d} />
  </svg>
);

const Caret = () => (
  <svg width="8" height="5" viewBox="0 0 8 5" aria-hidden="true"><path d="M0 0h8l-4 5z" fill="#555" /></svg>
);

const TITLE_ICONS = [
  ['새창', 'M1.500 6.500h7v7h-7zM6.500 6.500v-4h8v6h-6M6.500 3.500h8', 1],
  ['접기', 'M2 11.500h12M2 13.500h12', 1],
  ['복사', 'M4.500 2.500h10v7h-10zM4.500 3.500h10M4 5.500h-2.500v7h10v-3', 1],
  ['고정', 'M4 2h8M5.500 2v6l-2.500 2h10l-2.500 -2v-6zM8 10v5', 2],
];

const TOOL_ICONS = [
  ['차트추가', 'M12.500 6v-4.500h-11v10h5M7.500 7.500h7v7h-7zM11 9v4M9 11h4'],
  ['차트겹치기', 'M5 9.500h-3.500v-8h9v5M1.500 3.500h9M5.500 6.500h9v8h-9zM5.500 8.500h9'],
  ['기간', 'M1 2.500h2M5 2.500h2M9 2.500h2M13 2.500h2M1 14.500h2M5 14.500h2M9 14.500h2M13 14.500h2M1 10l3 -3 2 2 3 -4 2 4 4 -4'],
  ['십자선', 'M1 3.500h14M5.500 1v14M8 7l5 6M8 7v5M8 7h5'],
  ['수평선', 'M1 2.500h14M1 12l3 -5 2 3 3 -6 3 9 3 -2'],
  ['수직선', 'M4.500 1v14M1 12l4 -4 3 3 3 -6 2 6 3 1'],
  ['추세선', 'M2 14l11 -12M1 12l4 -4 3 5 3 -8 4 7'],
  ['지우개', 'M1 9l6 -6h5l-5 6v4h-6zM1 9h6M12 4v3M9 14l2 -5 1 5M14 9v5'],
  ['저장', 'M5 6v-4.500h10v7h-3M1.500 6.500h10v8h-10zM3 11l2 -2 2 2 3 -3M7 5l2 -2 2 2 2 -2'],
  ['확대경', 'M11 6a4 4 0 1 1 -9 0a4 4 0 1 1 9 0M10 10l5 5'],
];

const Quotes = () => (
  <Row $h={20} $gap={3}>
    <Quote>
      <Cell $w={172} $pl={29}>
        <span>
          <Num $c={RED}>9,940</Num>
          <svg width="12" height="11" viewBox="0 0 12 11"><path d="M6 0l6 5h-4v6h-4v-6h-4z" fill={RED} /></svg>
        </span>
        <Num $c={RED}>2,290</Num>
        <Num $c={RED}>+29.93%</Num>
      </Cell>
      <Cell $w={171} $pl={15}><Num>7,136,848</Num><Num $c={RED}>118.16%</Num><Num>48.80%</Num></Cell>
      <Cell $w={83} $pl={18}><Num>59,974백만</Num></Cell>
      <Cell $w={139} $pr={8}><Num>최우선</Num><Num>0</Num><Num $c={RED}>9,940</Num></Cell>
      <Cell $w={182} $pr={8} $last>
        <Num>시</Num><Num>7,650</Num><Num>고</Num><Num $c={RED}>9,940</Num><Num>저</Num><Num $c="#1548c8">6,740</Num>
      </Cell>
    </Quote>
    <Order $bg="#f6cfca">매수</Order>
    <Order $bg="#c8dff5">매도</Order>
  </Row>
);

const Toolbar = () => (
  <Row $h={20}>
    <Group><Key $first $w={18} aria-label="목록"><Glyph size={15} d="M4.500 2.500h10v12h-10M4.500 4.500h10M11.500 4v10M1 6l4 4-4 4z" /></Key></Group>
    <Group>
      <Drop $w={17} $c="#555" aria-label="종류" defaultValue="주"><option>주</option></Drop>
      <Key $w={13} aria-label="종류 열기"><Caret /></Key>
    </Group>
    <Group><Key $first $w={17}>전</Key></Group>
    <Group>
      <Field $w={54} defaultValue="010770" aria-label="종목코드" />
      <Key $w={13} aria-label="종목 목록"><Caret /></Key>
      <Key $w={18} $c="#777" aria-label="종목 검색"><Glyph size={14} w={2} d="M11 6a4 4 0 1 1 -9 0a4 4 0 1 1 9 0M10 10l5 5" /></Key>
    </Group>
    <Group>
      <Key $first $w={16} $c="#555" aria-label="소리"><Glyph size={13} fill="currentColor" d="M1 6h3l5-4v12l-5-4h-3zM11 6h1M14 6h1M11 10h1M14 10h1" /></Key>
      <Key $w={9} aria-label="소리 설정"><Caret /></Key>
    </Group>
    <Group><Badge>증</Badge><StockName>평화홀딩스</StockName></Group>
    <Group>{['일', '주', '월', '년'].map((t, i) => <Key key={t} $first={!i}>{t}</Key>)}</Group>
    <Group>{['분', '초', '틱'].map((t, i) => <Key key={t} $first={!i} $on={t === '초'}>{t}</Key>)}</Group>
    <Group $mr={1}>
      {['1', '3', '5', '10', '15', '30', '45', '60'].map((t, i) => <Key key={t} $first={!i} $on={t === '5'}>{t}</Key>)}
    </Group>
    <Group>
      <Drop $w={23} $pl={8} aria-label="간격" defaultValue="5"><option>5</option></Drop>
      <Key $w={13} aria-label="간격 열기"><Caret /></Key>
    </Group>
    <Group><Field $w={29} $pad={1} defaultValue="1783" aria-label="조회 개수" /></Group>
    <Total>/3600</Total>
    <Group>
      <Key $first $c="#555" aria-label="봉"><Glyph size={16} d="M2 4h3v5h-3zM3.500 2v9M7 5h3v4h-3zM8.500 3v8M12 9v6M9.500 12h5" fill="currentColor" /></Key>
      <Key $c="#555" aria-label="지표"><Glyph size={16} d="M1 8l4-4 4 4 5-6M12 9v6M9 12h6" /></Key>
      <Key $c="#555" aria-label="저장"><Glyph size={16} d="M2.500 2.500h10l1 1v10h-11zM5 2.500v4h6v-4M4.500 13v-4h7v4" /></Key>
      <Key $c="#555" aria-label="설정"><Glyph size={16} w={2} d="M12 8a4 4 0 1 1 -8 0a4 4 0 1 1 8 0M8 1v3M8 12v3M1 8h3M12 8h3M3 3l2 2M11 11l2 2M3 13l2-2M11 5l2-2" /></Key>
    </Group>
    <Check><input type="checkbox" />D</Check>
  </Row>
);

const App = () => (
  <Window>
    <GlobalStyle />
    <TitleBar>
      <WindowNo>1</WindowNo>
      <TitleText>{TITLE.map(t => <span key={t}>{t}</span>)}</TitleText>
      <TitleIcons>
        {TITLE_ICONS.map(([name, d, w]) => (
          <IconButton key={name} aria-label={name}><Glyph size={14} w={w} d={d} fill={name === '고정' ? 'currentColor' : 'none'} /></IconButton>
        ))}
        <IconButton aria-label="글꼴"><Glyph size={14} w={2} d="M3 5v-3h10v3M8 2v11M5 13h6" /></IconButton>
        <IconButton aria-label="도움말"><Glyph size={14} w={2} d="M4 5c0-4 8-4 8 0c0 3-4 2-4 6M8 13v2" /></IconButton>
        <Split />
        <IconButton aria-label="최소화"><Glyph size={14} w={2} d="M3 12h10" /></IconButton>
        <IconButton aria-label="이전 크기"><Glyph size={14} d="M1.500 7.500h9v6h-9zM1.500 8.500h9M4.500 7v-3.500h9v6h-3M4.500 4.500h9" /></IconButton>
        <IconButton aria-label="닫기"><Glyph size={14} d="M2 2l12 12M14 2l-12 12" /></IconButton>
      </TitleIcons>
    </TitleBar>
    <Frame>
      <Bars>
        <Toolbar />
        <Quotes />
      </Bars>
      <ChartBox>
        <LeftAxis />
        <Plot />
        <RightAxis />
        <Pane viewBox="7 1038 42 18" preserveAspectRatio="none">
          <rect x="7" y="1038" width="42" height="1" fill="#969696" />
          <rect x="48" y="1038" width="1" height="18" fill="#969696" />
        </Pane>
        <TimeAxis />
        <Pane viewBox="1866 1038 47 18" preserveAspectRatio="none">
          <rect x="1866" y="1038" width="47" height="1" fill="#969696" />
          <rect x="1866" y="1038" width="1" height="18" fill="#969696" />
          <text className="small" x="1873" y="1051">12:02:2</text>
        </Pane>
      </ChartBox>
      <Scroller>
        <Raised aria-label="왼쪽"><Glyph size={10} fill="#000" d="M10 3v10l-5-5z" /></Raised>
        <Track><Thumb /></Track>
        <Raised aria-label="재생"><Glyph size={10} fill="#000" d="M6 3v10l5-5z" /></Raised>
        <Raised aria-label="뒤로"><Glyph size={11} fill="#000" d="M8 3v10l-6-5zM15 3v10l-6-5z" /></Raised>
        <Raised aria-label="정지"><Glyph size={10} fill="#000" d="M3 3h10v10h-10z" /></Raised>
        <Raised aria-label="앞으로"><Glyph size={11} fill="#000" d="M2 3v10l6-5zM9 3v10l6-5z" /></Raised>
        <Speed>
          <input type="range" defaultValue="50" aria-label="속도" />
          <svg width="68" height="4" viewBox="0 0 68 4"><path d="M2.500 0v4M9.500 0v4M16.500 0v4M23.500 0v4M29.500 0v4M36.500 0v4M43.500 0v4M50.500 0v4M57.500 0v4M65.500 0v4" stroke="#333" /></svg>
        </Speed>
        <Tools>
          {TOOL_ICONS.map(([name, d]) => (
            <IconButton key={name} aria-label={name} $on={name === '십자선'}><Glyph size={15} d={d} /></IconButton>
          ))}
          <IconButton aria-label="축소"><Glyph size={14} w={2} d="M3 8h10" /></IconButton>
          <IconButton aria-label="확대"><Glyph size={14} w={2} d="M2 8h12M8 2v12" /></IconButton>
          <IconButton><b>A</b></IconButton>
        </Tools>
      </Scroller>
    </Frame>
  </Window>
);

export default App;
